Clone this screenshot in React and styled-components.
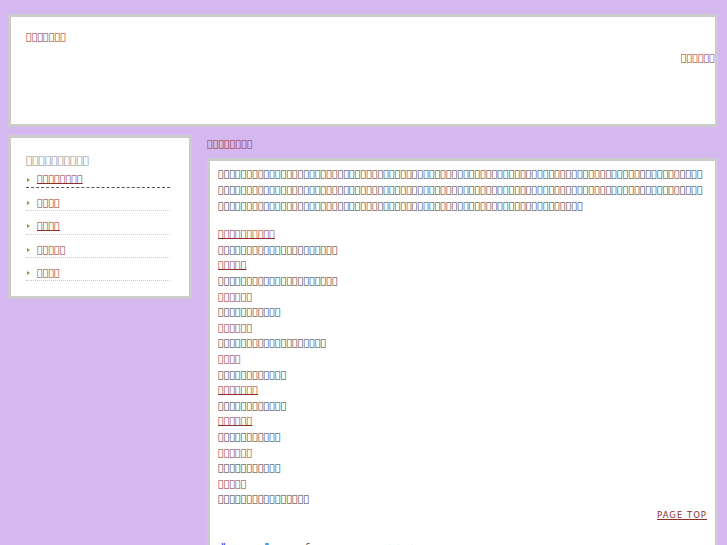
import styled, { createGlobalStyle } from "styled-components";

// the source page text renders as missing-glyph boxes; keep that look
const tofu = (n) => "\uE000".repeat(n);

const GlobalStyle = createGlobalStyle`
  body {
    margin: 0;
    background: #d5b8f0;
    font-family: "DejaVu Sans", sans-serif;
    font-size: 9.5px;
    color: #333;
  }
`;

const Page = styled("div")`
  padding: 14px 9px 0 8px;
`;

const Link = styled("a")`
  color: #8e2f2a;
  text-decoration: underline;
  cursor: pointer;
`;

const Header = styled("header")`
  display: flex;
  flex-direction: column;
  padding: 13px 0 0 15px;
  box-sizing: border-box;
  height: 113px;
  background: #fff;
  border: 3px solid #cccccc;
  line-height: 14px;
`;

const SiteTitle = styled("h1")`
  margin: 0;
  font-size: 9.5px;
  font-weight: normal;
`;

const HeaderNav = styled("p")`
  margin: 7px 0 0;
  text-align: right;
`;

const Columns = styled("div")`
  display: flex;
  align-items: flex-start;
  column-gap: 15px;
  margin-top: 8px;
`;

const Sidebar = styled("aside")`
  width: 184px;
  height: 164px;
  box-sizing: border-box;
  flex-shrink: 0;
  padding: 16px 19px 0 15px;
  background: #fff;
  border: 3px solid #cccccc;
`;

const SideTitle = styled("h2")`
  margin: 0;
  font-size: 10.5px;
  font-weight: normal;
  line-height: 12px;
  color: #8a8a8a;
`;

const SideList = styled("ul")`
  list-style: none;
  margin: 0;
  padding: 0;
`;

const SideItem = styled("li")`
  display: flex;
  align-items: center;
  padding-top: ${(p) => (p.$first ? "6.4px" : "8px")};
  line-height: 14.4px;
  border-bottom: 1px ${(p) => (p.$active ? "dashed #555" : "dotted #ccc")};

  &::before {
    content: "";
    width: 0;
    height: 0;
    margin: 0 7px 0 1px;
    border-left: 3px solid #6aa84f;
    border-top: 2px solid transparent;
    border-bottom: 2px solid transparent;
  }
`;

const Main = styled("main")`
  flex: 1;
  min-width: 0;
  padding-top: 2px;
`;

const Crumb = styled("div")`
  line-height: 14.4px;
  margin-bottom: 7px;
`;

const ContentBox = styled("section")`
  background: #fff;
  border: 3px solid #cccccc;
  padding: 4.5px 8px 20px;
`;

const Lead = styled("p")`
  margin: 0 0 12.4px;
  line-height: 16px;
  word-break: break-all;
  line-break: anywhere;
  overflow-wrap: anywhere;
`;

const EntryList = styled("dl")`
  margin: 0;
  line-height: 15.6px;
`;

const EntryTerm = styled("dt")`
  margin: 0;
`;

const EntryDesc = styled("dd")`
  margin: 0;
`;

const PageTop = styled("div")`
  margin-top: 1px;
  text-align: right;
  font-size: 8.5px;
  line-height: 14px;
  letter-spacing: 1px;
`;

const Footer = styled("footer")`
  margin-top: 18px;
  padding-left: 3px;
  font-size: 9px;
  line-height: 14px;
  color: #444;
`;

const Quote = styled("span")`
  color: #2233ee;
  font-weight: bold;
`;

const Credit = styled("span")`
  color: #7bd27b;
  font-size: 7px;
`;

const sideItems = [8, 4, 4, 5, 4];

const entries = [
  [10, 21],
  [5, 21],
  [6, 11],
  [6, 19],
  [4, 12],
  [7, 12],
  [6, 11],
  [6, 11],
  [5, 16],
];

export default function App() {
  return (
    <>
      <GlobalStyle />
      <Page>
        <Header>
          <SiteTitle>
            <Link>{tofu(7)}</Link>
          </SiteTitle>
          <HeaderNav>
            <Link>{tofu(6)}</Link>
          </HeaderNav>
        </Header>
        <Columns>
          <Sidebar>
            <SideTitle>{tofu(10)}</SideTitle>
            <SideList>
              {sideItems.map((n, i) => (
                <SideItem key={i} $first={i === 0} $active={i === 0}>
                  <Link>{tofu(n)}</Link>
                </SideItem>
              ))}
            </SideList>
          </Sidebar>
          <Main>
            <Crumb>
              <Link>{tofu(8)}</Link>
            </Crumb>
            <ContentBox>
              <Lead>{tofu(234)}</Lead>
              <EntryList>
                {entries.map(([t, d], i) => (
                  <div key={i}>
                    <EntryTerm>
                      <Link>{tofu(t)}</Link>
                    </EntryTerm>
                    <EntryDesc>{tofu(d)}</EntryDesc>
                  </div>
                ))}
              </EntryList>
              <PageTop>
                <Link>PAGE TOP</Link>
              </PageTop>
              <Footer>
                <Quote>"</Quote>
                <span>ro wo ne</span>
                <Quote>"</Quote>
                <span> ma wa </span>&amp;
                <span> ra no se wa </span>
                <Credit>www.hpbanks.com</Credit>
              </Footer>
            </ContentBox>
          </Main>
        </Columns>
      </Page>
    </>
  );
}
